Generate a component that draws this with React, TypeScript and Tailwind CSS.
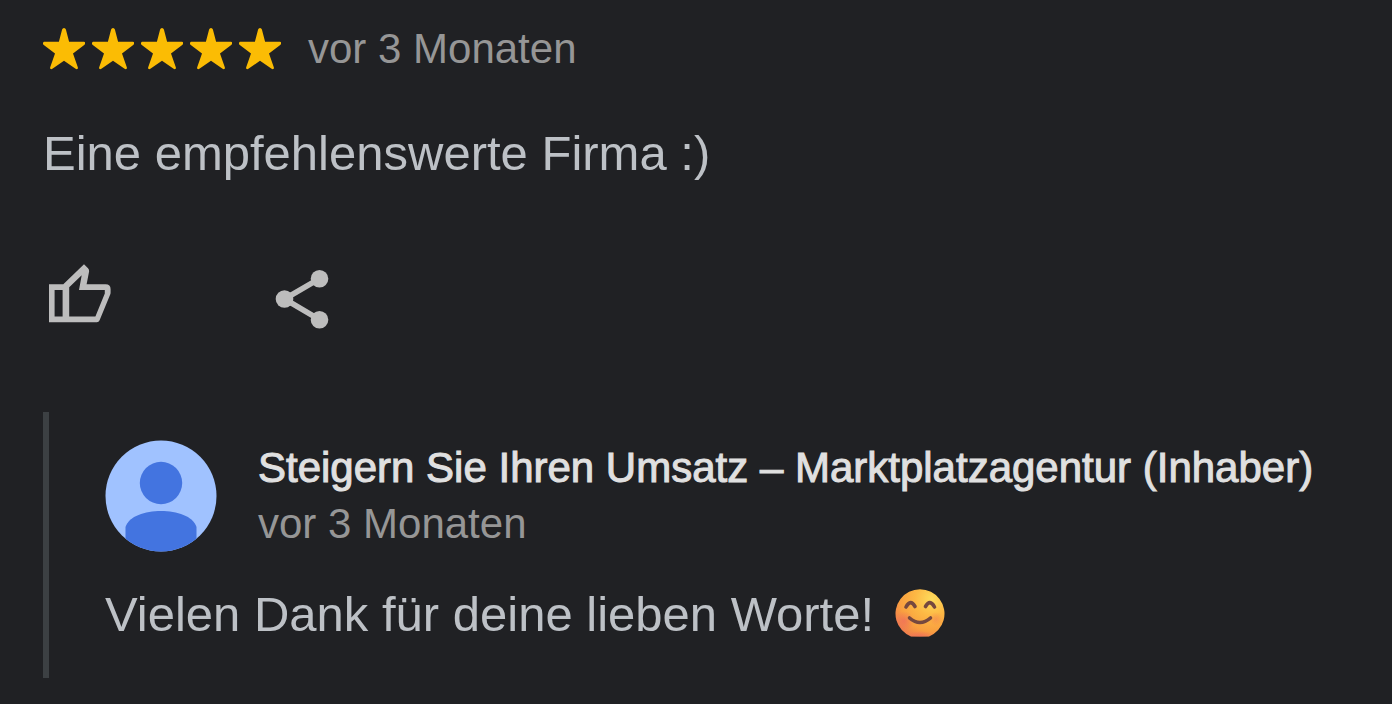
function Star() {
  return (
    <svg viewBox="0 0 42 42" className="size-[42px]" aria-hidden="true">
      <path
        d="M21 0Q22.4 0 22.9 1.6L26.1 13.8H41Q42.4 14 42.2 15.4Q42.2 16.2 41.2 17L30 25.6L34.8 39.2Q35.2 40.6 34.4 41Q33.6 41.4 32.6 40.8L21 32.8L9.4 40.8Q8.4 41.4 7.6 41Q6.8 40.6 7.2 39.2L12 25.6L0.8 17Q-0.2 16.2 0 15.4Q0 14 1 13.8H15.9L19.1 1.6Q19.6 0 21 0Z"
        fill="#fbbc04"
      />
    </svg>
  )
}

function ThumbIcon() {
  return (
    <svg viewBox="0 0 64 68" className="h-[68px] w-16" aria-hidden="true">
      <path
        fillRule="evenodd"
        d="M1 20.3H15.3L36 0.3L40 4.2Q41.4 5.6 41.1 7.4L38.6 20.3H57.6Q62.6 20.3 62.6 25.3V28.4Q62.6 29.6 62.1 30.8L51.6 56.2Q50.8 58.2 48.8 58.2H1ZM6.6 26V52.6H14.6V26ZM21.2 23.2V52.6H47.4L56.8 29.4V26H31L33.7 11.2Z"
        fill="#bdbdbd"
      />
    </svg>
  )
}

function ShareIcon() {
  return (
    <svg viewBox="0 0 54 68" className="h-[68px] w-[54px]" aria-hidden="true">
      <path d="M44.5 14.7L9.5 35L44.5 55.7" fill="none" stroke="#bdbdbd" strokeWidth="5.6" />
      <circle cx="44.5" cy="14.7" r="8.8" fill="#bdbdbd" />
      <circle cx="9.5" cy="35" r="8.8" fill="#bdbdbd" />
      <circle cx="44.5" cy="55.7" r="8.8" fill="#bdbdbd" />
    </svg>
  )
}

function Avatar() {
  return (
    <svg viewBox="0 0 112 112" className="size-28 shrink-0" role="img" aria-label="Profilbild">
      <defs>
        <clipPath id="avatar-clip">
          <circle cx="56" cy="56" r="55.5" />
        </clipPath>
      </defs>
      <g clipPath="url(#avatar-clip)">
        <rect width="112" height="112" fill="#a0c2ff" />
        <circle cx="56" cy="43" r="21.2" fill="#4374e0" />
        <path d="M20.5 112V87C24 76 40 71 56 71S88 76 91.5 87V112Z" fill="#4374e0" />
      </g>
    </svg>
  )
}

function SmileEmoji() {
  return (
    <svg viewBox="0 0 50 50" className="size-[50px]" role="img" aria-label="😊">
      <defs>
        <radialGradient id="face" cx="0.74" cy="0.2" r="0.85">
          <stop offset="0" stopColor="#fddc5c" />
          <stop offset="0.4" stopColor="#fdb844" />
          <stop offset="0.75" stopColor="#f9a040" />
          <stop offset="1" stopColor="#f0804c" />
        </radialGradient>
        <radialGradient id="blush">
          <stop offset="0" stopColor="#f0705a" stopOpacity="0.8" />
          <stop offset="1" stopColor="#f0705a" stopOpacity="0" />
        </radialGradient>
        <clipPath id="face-clip">
          <path d="M16 47.5A24.5 24.5 0 1 1 34 47.5Z" />
        </clipPath>
      </defs>
      <g clipPath="url(#face-clip)">
        <rect width="50" height="50" fill="url(#face)" />
        <circle cx="9" cy="32" r="10" fill="url(#blush)" />
        <circle cx="41" cy="30" r="7" fill="url(#blush)" opacity="0.5" />
        <ellipse cx="25" cy="47" rx="14" ry="5" fill="url(#blush)" />
      </g>
      <g fill="none" stroke="#75483f" strokeWidth="3.6" strokeLinecap="round">
        <path d="M11 18Q15.5 9.5 20 17.5" />
        <path d="M30.5 17.5Q35 9.5 39.5 18" />
        <path d="M14.5 29Q25 38 35.5 29" />
      </g>
    </svg>
  )
}

export default function App() {
  return (
    <main className="min-h-screen bg-[#202124] pt-[19px] pr-6 pb-[26px] pl-[43px] font-['Liberation_Sans',Arial,sans-serif]">
      <article>
        <div className="flex items-center gap-[27px]">
          <div className="flex gap-[7px]" role="img" aria-label="5 von 5 Sternen">
            {[1, 2, 3, 4, 5].map((n) => (
              <Star key={n} />
            ))}
          </div>
          <time className="text-[42px] leading-[60px] text-[#969696]">vor 3 Monaten</time>
        </div>

        <p className="mt-11 text-[49px] leading-[60px] text-[#bdc1c6]">
          Eine empfehlenswerte Firma :)
        </p>

        <div className="mt-[81px] flex items-center gap-[163px] pl-[5px]">
          <button type="button" aria-label="Gefällt mir">
            <ThumbIcon />
          </button>
          <button type="button" aria-label="Teilen">
            <ShareIcon />
          </button>
        </div>

        {/* Owner reply */}
        <section className="mt-20 border-l-[6px] border-[#3c4043] pt-7 pb-[34px] pl-14">
          <header className="flex gap-[41px]">
            <Avatar />
            <div>
              <h2 className="text-[42px] leading-[56px] text-[#e0e0e0] [-webkit-text-stroke:1px_#e0e0e0]">
                Steigern Sie Ihren Umsatz – Marktplatzagentur (Inhaber)
              </h2>
              <time className="block text-[42px] leading-[56px] text-[#969696]">vor 3 Monaten</time>
            </div>
          </header>
          <p className="mt-8 flex items-center gap-[21px] text-[49px] leading-[60px] text-[#bdc1c6]">
            Vielen Dank für deine lieben Worte!
            <SmileEmoji />
          </p>
        </section>
      </article>
    </main>
  )
}
